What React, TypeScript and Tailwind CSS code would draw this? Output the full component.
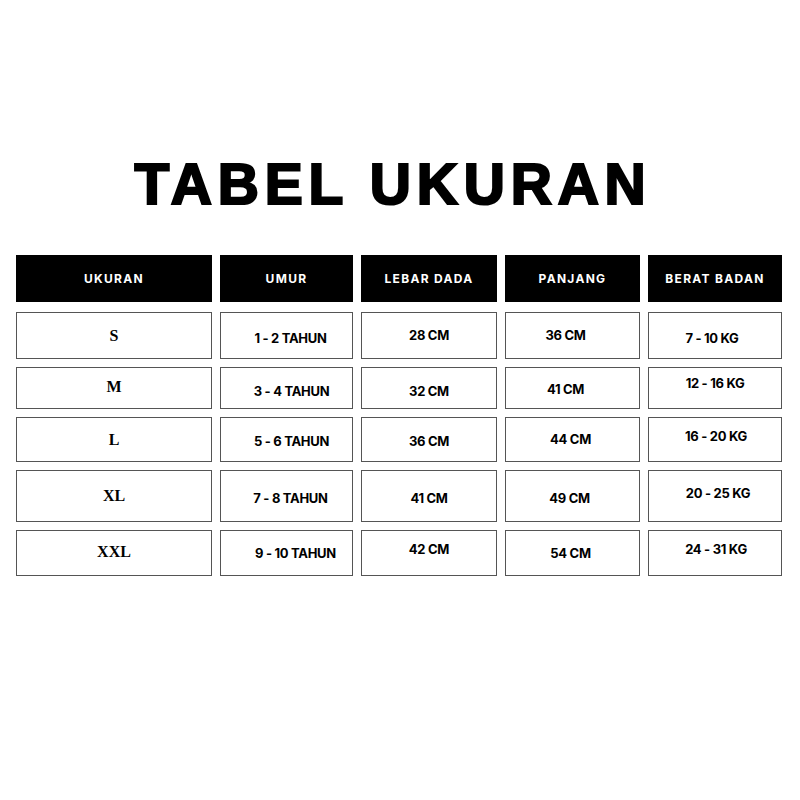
import React from 'react'

type Cell = { text: string; pad: string }
type Row = { height: string; cells: Cell[] }

const headers = ['UKURAN', 'UMUR', 'LEBAR DADA', 'PANJANG', 'BERAT BADAN']

const rows: Row[] = [
  {
    height: 'h-[47px]',
    cells: [
      { text: 'S', pad: '' },
      { text: '1 - 2 TAHUN', pad: 'pl-[8px] pt-[6px]' },
      { text: '28 CM', pad: '' },
      { text: '36 CM', pad: 'pr-[14px]' },
      { text: '7 - 10 KG', pad: 'pr-[6px] pt-[6px]' },
    ],
  },
  {
    height: 'h-[42px]',
    cells: [
      { text: 'M', pad: 'pb-[2px]' },
      { text: '3 - 4 TAHUN', pad: 'pl-[10px] pt-[8px]' },
      { text: '32 CM', pad: 'pt-[8px]' },
      { text: '41 CM', pad: 'pr-[14px] pt-[4px]' },
      { text: '12 - 16 KG', pad: 'pb-[8px]' },
    ],
  },
  {
    height: 'h-[45px]',
    cells: [
      { text: 'L', pad: '' },
      { text: '5 - 6 TAHUN', pad: 'pl-[10px] pt-[4px]' },
      { text: '36 CM', pad: 'pt-[4px]' },
      { text: '44 CM', pad: 'pr-[4px]' },
      { text: '16 - 20 KG', pad: 'pl-[2px] pb-[6px]' },
    ],
  },
  {
    height: 'h-[52px]',
    cells: [
      { text: 'XL', pad: '' },
      { text: '7 - 8 TAHUN', pad: 'pl-[8px] pt-[6px]' },
      { text: '41 CM', pad: 'pt-[6px]' },
      { text: '49 CM', pad: 'pr-[6px] pt-[6px]' },
      { text: '20 - 25 KG', pad: 'pl-[6px] pb-[4px]' },
    ],
  },
  {
    height: 'h-[46px]',
    cells: [
      { text: 'XXL', pad: 'pb-[2px]' },
      { text: '9 - 10 TAHUN', pad: 'pl-[18px] pt-[2px]' },
      { text: '42 CM', pad: 'pb-[6px]' },
      { text: '54 CM', pad: 'pr-[4px] pt-[2px]' },
      { text: '24 - 31 KG', pad: 'pl-[2px] pb-[6px]' },
    ],
  },
]

const cols = 'grid grid-cols-[196px_133px_136px_135px_134px] gap-x-2'

const App: React.FC = () => {
  return (
    <div className="flex h-[800px] w-[800px] flex-col bg-white pt-[156px]">
      <h1 className="pr-[14px] text-center font-['Liberation_Sans',Arial,sans-serif] text-[57px] font-bold leading-none tracking-[5.8px] text-black [-webkit-text-stroke:2.2px_black]">
        TABEL UKURAN
      </h1>

      <div className="mt-[42px] px-4">
        <div className={`${cols} h-[47px]`}>
          {headers.map((h) => (
            <div
              key={h}
              className="flex items-center justify-center bg-black font-['Inter',sans-serif] text-[12px] font-bold tracking-[1.3px] text-white"
            >
              {h}
            </div>
          ))}
        </div>

        <div className="mt-[10px] flex flex-col gap-2">
          {rows.map((row, ri) => (
            <div key={ri} className={`${cols} ${row.height}`}>
              {row.cells.map((cell, ci) => (
                <div
                  key={ci}
                  className={`flex items-center justify-center border border-[#555] bg-white text-black ${cell.pad} ${
                    ci === 0
                      ? "font-['Liberation_Serif','Times_New_Roman',serif] text-[16px] font-bold"
                      : "font-['Inter',sans-serif] text-[13px] font-bold tracking-[-0.3px]"
                  }`}
                >
                  {cell.text}
                </div>
              ))}
            </div>
          ))}
        </div>
      </div>
    </div>
  )
}

export default App
